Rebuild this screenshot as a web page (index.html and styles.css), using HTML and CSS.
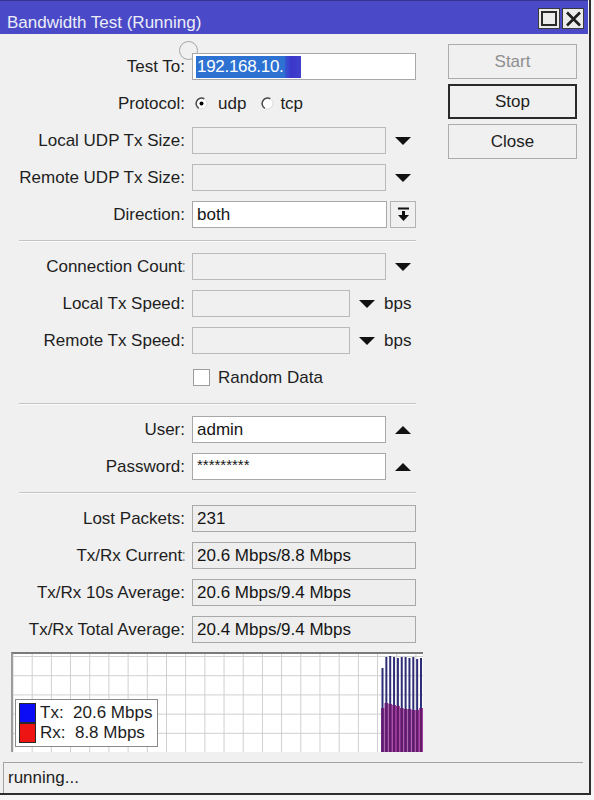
FILE: index.html
```html
<!DOCTYPE html>
<html>
<head>
<meta charset="utf-8">
<title>Bandwidth Test</title>
<link rel="stylesheet" href="styles.css">
</head>
<body>
<div class="window">
  <div class="titlebar">
    <span class="title">Bandwidth Test (Running)</span>
    <div class="tb-buttons">
      <span class="tb-btn"><svg width="16" height="15" viewBox="0 0 16 15"><rect x="1" y="1" width="14" height="13" fill="none" stroke="#2a2a2a" stroke-width="2"/></svg></span>
      <span class="tb-btn"><svg width="17" height="16" viewBox="0 0 17 16"><path d="M2 1.5L15 14.5M15 1.5L2 14.5" stroke="#1e1e1e" stroke-width="2.6" fill="none"/></svg></span>
    </div>
  </div>

  <div class="main">
    <div class="form">
      <div class="row">
        <span class="lbl">Test To:</span>
        <div class="field"><div class="box white w-full front pad3"><span class="sel">192.168.10.</span><span class="blur"></span></div></div>
      </div>
      <div class="row">
        <span class="lbl">Protocol:</span>
        <div class="field">
          <svg class="radio r1" width="13" height="13" viewBox="0 0 13 13"><circle cx="6.5" cy="6.5" r="5.5" fill="#fff" stroke="#dcdcdc" stroke-width="1"/><path d="M9.25 1.74A5.5 5.5 0 0 0 3.75 11.26" stroke="#4a4a4a" stroke-width="1.5" fill="none"/><circle cx="6.5" cy="6.5" r="2" fill="#000"/></svg>
          <span class="rtext">udp</span>
          <svg class="radio r2" width="13" height="13" viewBox="0 0 13 13"><circle cx="6.5" cy="6.5" r="5.5" fill="#fff" stroke="#dcdcdc" stroke-width="1"/><path d="M9.25 1.74A5.5 5.5 0 0 0 3.75 11.26" stroke="#4a4a4a" stroke-width="1.5" fill="none"/></svg>
          <span class="rtext2">tcp</span>
        </div>
      </div>
      <div class="row">
        <span class="lbl">Local UDP Tx Size:</span>
        <div class="field"><div class="box w-mid"></div><svg class="tri" width="16" height="8" viewBox="0 0 16 8"><path d="M0 0H16L8 8Z" fill="#111"/></svg></div>
      </div>
      <div class="row">
        <span class="lbl">Remote UDP Tx Size:</span>
        <div class="field"><div class="box w-mid"></div><svg class="tri" width="16" height="8" viewBox="0 0 16 8"><path d="M0 0H16L8 8Z" fill="#111"/></svg></div>
      </div>
      <div class="row">
        <span class="lbl">Direction:</span>
        <div class="field"><div class="box white w-dir">both</div><span class="dd-btn"><svg width="13" height="15" viewBox="0 0 13 15"><path d="M1 0.5h11v2H1z M5 4h3v4h4L6.5 14 1 8h4z" fill="#111"/></svg></span></div>
      </div>

      <div class="sep"></div>

      <div class="row">
        <span class="lbl">Connection Count<span class="fc">:</span></span>
        <div class="field"><div class="box w-mid"></div><svg class="tri" width="16" height="8" viewBox="0 0 16 8"><path d="M0 0H16L8 8Z" fill="#111"/></svg></div>
      </div>
      <div class="row">
        <span class="lbl">Local Tx Speed:</span>
        <div class="field"><div class="box w-short"></div><svg class="tri tri-s" width="16" height="8" viewBox="0 0 16 8"><path d="M0 0H16L8 8Z" fill="#111"/></svg><span class="unit">bps</span></div>
      </div>
      <div class="row">
        <span class="lbl">Remote Tx Speed:</span>
        <div class="field"><div class="box w-short"></div><svg class="tri tri-s" width="16" height="8" viewBox="0 0 16 8"><path d="M0 0H16L8 8Z" fill="#111"/></svg><span class="unit">bps</span></div>
      </div>
      <div class="row">
        <span class="lbl"></span>
        <div class="field"><span class="check"></span><span class="ctext">Random Data</span></div>
      </div>

      <div class="sep"></div>

      <div class="row">
        <span class="lbl">User:</span>
        <div class="field"><div class="box white w-mid">admin</div><svg class="tri" width="16" height="8" viewBox="0 0 16 8"><path d="M0 8H16L8 0Z" fill="#111"/></svg></div>
      </div>
      <div class="row">
        <span class="lbl">Password:</span>
        <div class="field"><div class="box white w-mid"><span class="pw">*********</span></div><svg class="tri" width="16" height="8" viewBox="0 0 16 8"><path d="M0 8H16L8 0Z" fill="#111"/></svg></div>
      </div>

      <div class="sep"></div>

      <div class="row">
        <span class="lbl">Lost Packets:</span>
        <div class="field"><div class="box ro w-full">231</div></div>
      </div>
      <div class="row">
        <span class="lbl">Tx/Rx Current<span class="fc">:</span></span>
        <div class="field"><div class="box ro w-full">20.6 Mbps/8.8 Mbps</div></div>
      </div>
      <div class="row">
        <span class="lbl">Tx/Rx 10s Average:</span>
        <div class="field"><div class="box ro w-full">20.6 Mbps/9.4 Mbps</div></div>
      </div>
      <div class="row">
        <span class="lbl">Tx/Rx Total Average:</span>
        <div class="field"><div class="box ro w-full">20.4 Mbps/9.4 Mbps</div></div>
      </div>
    </div>

    <div class="actions">
      <div class="btn disabled">Start</div>
      <div class="btn default">Stop</div>
      <div class="btn">Close</div>
    </div>
  </div>

  <div class="graph">
    <div class="legend">
      <div class="leg-row"><span class="sw tx"></span><span class="lt">Tx:  20.6 Mbps</span></div>
      <div class="leg-row"><span class="sw rx"></span><span class="lt">Rx:  8.8 Mbps</span></div>
    </div>
    <svg class="bars" width="42" height="98" viewBox="0 0 42 98">
      <g fill="#a23c9c">
        <rect x="-0.4" y="54" width="3.9" height="44"/>
        <rect x="3.45" y="49" width="3.9" height="49"/>
        <rect x="7.3" y="50" width="3.9" height="48"/>
        <rect x="11.15" y="51" width="3.9" height="47"/>
        <rect x="15" y="52" width="3.9" height="46"/>
        <rect x="18.85" y="54" width="3.9" height="44"/>
        <rect x="22.7" y="55" width="3.9" height="43"/>
        <rect x="26.55" y="55" width="3.9" height="43"/>
        <rect x="30.4" y="56" width="3.9" height="42"/>
        <rect x="34.25" y="56" width="3.9" height="42"/>
        <rect x="38.1" y="54" width="3.9" height="44"/>
      </g>
      <g fill="#2e2d78">
        <rect x="0.5" y="14" width="2" height="84"/>
        <rect x="4.35" y="3" width="2" height="95"/>
        <rect x="8.2" y="2" width="2" height="96"/>
        <rect x="12.05" y="3" width="2" height="95"/>
        <rect x="15.9" y="4" width="2" height="94"/>
        <rect x="19.75" y="3" width="2" height="95"/>
        <rect x="23.6" y="3" width="2" height="95"/>
        <rect x="27.45" y="4" width="2" height="94"/>
        <rect x="31.3" y="3" width="2" height="95"/>
        <rect x="35.15" y="5" width="2" height="93"/>
        <rect x="39" y="4" width="2" height="94"/>
      </g>
      <g fill="#641a6a">
        <rect x="0.5" y="54" width="2" height="44"/>
        <rect x="4.35" y="49" width="2" height="49"/>
        <rect x="8.2" y="50" width="2" height="48"/>
        <rect x="12.05" y="51" width="2" height="47"/>
        <rect x="15.9" y="52" width="2" height="46"/>
        <rect x="19.75" y="54" width="2" height="44"/>
        <rect x="23.6" y="55" width="2" height="43"/>
        <rect x="27.45" y="55" width="2" height="43"/>
        <rect x="31.3" y="56" width="2" height="42"/>
        <rect x="35.15" y="56" width="2" height="42"/>
        <rect x="39" y="54" width="2" height="44"/>
      </g>
    </svg>
  </div>

  <div class="status">running...</div>

  <div class="cursor-ring"></div>
</div>
</body>
</html>
```

FILE: styles.css
```css
* { box-sizing: border-box; }

html { background: #f6f6f6; }

body {
  margin: 0;
  font-family: "Liberation Sans", Arial, sans-serif;
  font-size: 17px;
  color: #1e1e1e;
}

.window {
  position: relative;
  width: 591px;
  height: 795px;
  background: #f0f0f0;
  border-right: 2px solid #2e2e2e;
  border-bottom: 2px solid #2e2e2e;
  display: flex;
  flex-direction: column;
}

/* Title bar */
.titlebar {
  height: 34px;
  margin-right: 1px;
  background: #4a4ac8;
  border-top: 1px solid #34348a;
  display: flex;
  align-items: flex-start;
  justify-content: space-between;
  padding: 0 4px 0 7px;
}
.title {
  color: #eceef7;
  padding-top: 12px;
  line-height: 19px;
}
.tb-buttons {
  display: flex;
  gap: 2px;
  padding-top: 7px;
}
.tb-btn {
  width: 22px;
  height: 21px;
  background: #ebebeb;
  border: 1px solid #3a3a3a;
  display: flex;
  align-items: center;
  justify-content: center;
}

/* Main */
.main { display: flex; }
.form { width: 448px; padding-top: 14px; }

.row {
  display: grid;
  grid-template-columns: 185px 1fr;
  column-gap: 7px;
  align-items: center;
  height: 37px;
}
.lbl { text-align: right; white-space: nowrap; }
.fc { margin-left: -1px; margin-right: -1px; color: #8a8a8a; }
.field { display: flex; align-items: center; }

.box {
  height: 27px;
  border: 1px solid #bababa;
  background: #f0f0f0;
  padding: 0 4px;
  display: flex;
  align-items: center;
  white-space: nowrap;
  color: #151515;
}
.box.white { background: #fff; border-color: #a8a8a8; }
.box.ro { background: #eeeeee; border-color: #a9a9a9; }
.box.pad3 { padding-left: 3px; }
.front { position: relative; z-index: 1; }

.w-full { width: 224px; }
.w-mid { width: 194px; }
.w-dir { width: 195px; }
.w-short { width: 158px; }

.sel {
  display: inline-block;
  background: #2d72d2;
  color: #fff;
  line-height: 22px;
  padding: 0 1px;
  letter-spacing: -0.3px;
}
.blur {
  display: inline-block;
  width: 16px;
  height: 22px;
  background: linear-gradient(to right, #3556d2, #3b36c9 40%, #4040cc);
}

.tri { margin-left: 9px; flex: none; }
.tri-s { margin-left: 9px; }
.unit { margin-left: 9px; }

.dd-btn {
  margin-left: 3px;
  width: 26px;
  height: 27px;
  border: 1px solid #b3b3b3;
  background: #f0f0f0;
  display: flex;
  align-items: center;
  justify-content: center;
}

.radio { flex: none; }
.r1 { margin-left: 3px; }
.rtext { margin-left: 10px; }
.r2 { margin-left: 15px; }
.rtext2 { margin-left: 6px; }

.check {
  width: 17px;
  height: 17px;
  margin-left: 1px;
  background: #fff;
  border: 1px solid #9c9c9c;
}
.ctext { margin-left: 8px; }

.pw { font-size: 15px; position: relative; top: -2px; }

.sep {
  margin: 7px 0 6px 19px;
  width: 397px;
  height: 2px;
  border-top: 1px solid #c4c4c4;
  border-bottom: 1px solid #fbfbfb;
}

/* Buttons */
.actions {
  display: flex;
  flex-direction: column;
  gap: 5px;
  padding-top: 10px;
}
.btn {
  width: 129px;
  height: 35px;
  border: 1px solid #acacac;
  background: #f0f0f0;
  display: flex;
  align-items: center;
  justify-content: center;
  color: #1e1e1e;
}
.btn.disabled { color: #8e8e8e; }
.btn.default { border: 2px solid #2a2a2a; }

/* Graph */
.graph {
  position: relative;
  margin: 4px 0 0 11px;
  width: 412px;
  height: 100px;
  flex: none;
  border-top: 2px solid #7a7a7a;
  border-left: 2px solid #9c9c9c;
  background-color: #fff;
  background-image:
    linear-gradient(to right, #cecece 1px, transparent 1px),
    linear-gradient(to bottom, #cecece 1px, transparent 1px);
  background-size: 19.2px 19.2px;
  background-position: 18.7px 100%;
}
.legend {
  position: absolute;
  left: 2px;
  bottom: 5px;
  width: 143px;
  height: 48px;
  background: #fff;
  border: 1px solid #8a8a8a;
  padding: 3px 3px 0 3px;
}
.leg-row { display: flex; align-items: center; height: 20px; }
.sw { width: 17px; height: 20px; border: 1px solid #2a2a2a; flex: none; }
.sw.tx { background: #0c0cf5; }
.sw.rx { background: #ee1414; }
.lt { margin-left: 4px; white-space: pre; line-height: 20px; }

.bars {
  position: absolute;
  right: 0;
  bottom: 0;
}

/* Status */
.status {
  flex: 1;
  margin: 10px 6px 0 3px;
  border-top: 1px solid #a3a3a3;
  border-left: 1px solid #a3a3a3;
  padding: 5px 0 0 4px;
  line-height: 19px;
}

.cursor-ring {
  position: absolute;
  left: 179px;
  top: 41px;
  width: 19px;
  height: 19px;
  border: 1.5px solid #a6a6a6;
  border-radius: 50%;
  z-index: 0;
}
```
